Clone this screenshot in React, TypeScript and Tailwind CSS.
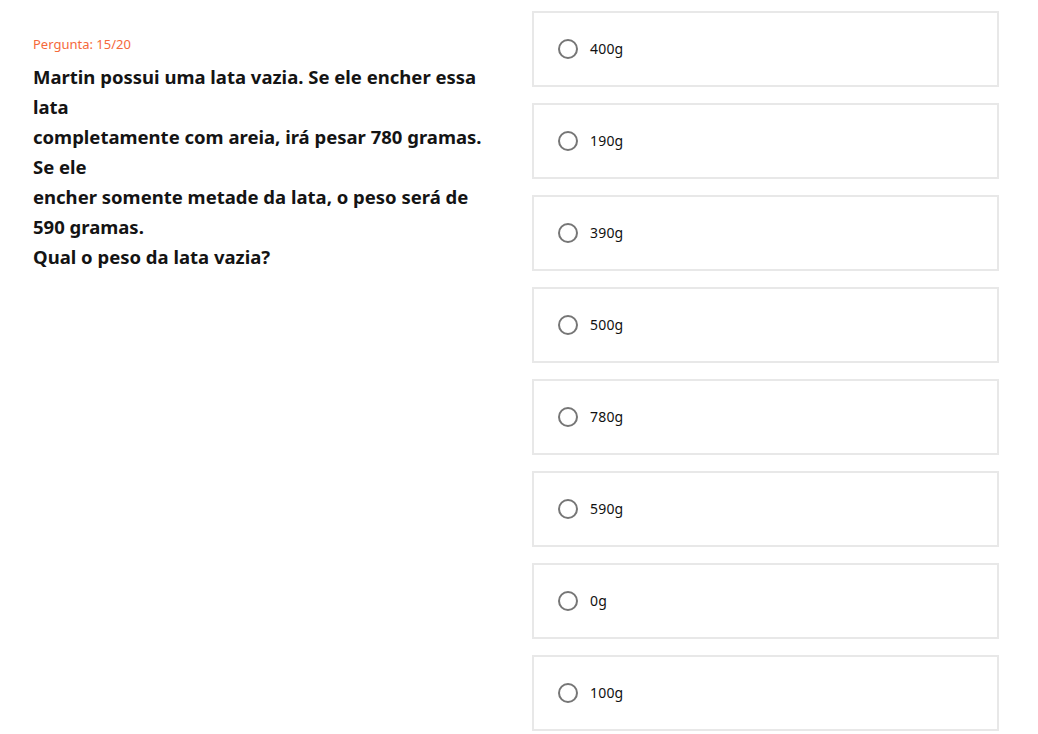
import React from "react";

const options = ["400g", "190g", "390g", "500g", "780g", "590g", "0g", "100g"];

const lines = [
  "Martin possui uma lata vazia. Se ele encher essa",
  "lata",
  "completamente com areia, irá pesar 780 gramas.",
  "Se ele",
  "encher somente metade da lata, o peso será de",
  "590 gramas.",
  "Qual o peso da lata vazia?",
];

export default function App() {
  return (
    <div className="min-h-screen bg-white font-['Noto_Sans',_sans-serif]">
      <div className="flex gap-[32px] pl-[33px] pt-[11px]">
        <div className="w-[467px] pt-[24px]">
          <div className="text-[13px] leading-[18px] text-[#f5693b]">Pergunta: 15/20</div>
          <div className="mt-[9px] text-[18.5px] leading-[30px] font-bold text-[#141414]">
            {lines.map((l, i) => (
              <div key={i}>{l}</div>
            ))}
          </div>
        </div>
        <div className="flex w-[467px] flex-col gap-[16px]">
          {options.map((o) => (
            <label
              key={o}
              className="flex h-[76px] items-center gap-[12px] border-2 border-[#e8e8e8] bg-white pl-[24px]"
            >
              <svg width="20" height="20" viewBox="0 0 20 20" className="shrink-0">
                <circle cx="10" cy="10" r="9" fill="none" stroke="#767676" strokeWidth="2" />
              </svg>
              <span className="text-[14px] leading-[18px] tracking-[0.2px] text-[#111]">{o}</span>
            </label>
          ))}
        </div>
      </div>
    </div>
  );
}
